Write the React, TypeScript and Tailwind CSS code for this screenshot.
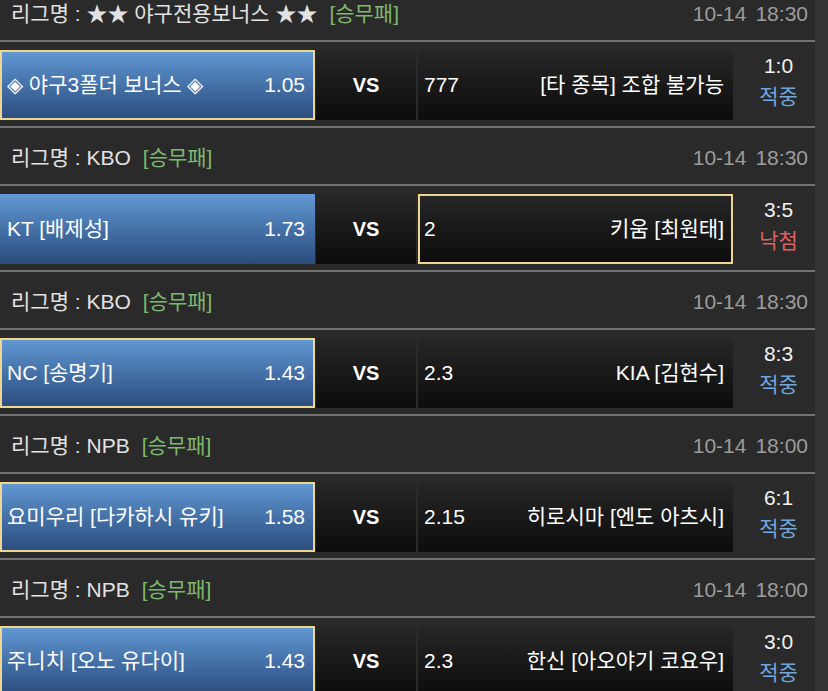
type Match = {
  league: string;
  date: string;
  time: string;
  home: string;
  homeOdds: string;
  away: string;
  awayOdds: string;
  pick: "home" | "away";
  score: string;
  win: boolean;
};

const matches: Match[] = [
  {
    league: "★★ 야구전용보너스 ★★",
    date: "10-14",
    time: "18:30",
    home: "◈ 야구3폴더 보너스 ◈",
    homeOdds: "1.05",
    away: "[타 종목] 조합 불가능",
    awayOdds: "777",
    pick: "home",
    score: "1:0",
    win: true,
  },
  {
    league: "KBO",
    date: "10-14",
    time: "18:30",
    home: "KT [배제성]",
    homeOdds: "1.73",
    away: "키움 [최원태]",
    awayOdds: "2",
    pick: "away",
    score: "3:5",
    win: false,
  },
  {
    league: "KBO",
    date: "10-14",
    time: "18:30",
    home: "NC [송명기]",
    homeOdds: "1.43",
    away: "KIA [김현수]",
    awayOdds: "2.3",
    pick: "home",
    score: "8:3",
    win: true,
  },
  {
    league: "NPB",
    date: "10-14",
    time: "18:00",
    home: "요미우리 [다카하시 유키]",
    homeOdds: "1.58",
    away: "히로시마 [엔도 아츠시]",
    awayOdds: "2.15",
    pick: "home",
    score: "6:1",
    win: true,
  },
  {
    league: "NPB",
    date: "10-14",
    time: "18:00",
    home: "주니치 [오노 유다이]",
    homeOdds: "1.43",
    away: "한신 [아오야기 코요우]",
    awayOdds: "2.3",
    pick: "home",
    score: "3:0",
    win: true,
  },
];

const picked = "shadow-[inset_0_0_0_2px_#ecd792]";

function MatchBlock({ m }: { m: Match }) {
  return (
    <div>
      <div className="flex h-[56px] items-center justify-between pl-[11px] pr-[7px] pt-1 text-[21px]">
        <div className="text-[#e2e2e2]">
          리그명 : {m.league}
          <span className="ml-3 text-[#7db86c]">[승무패]</span>
        </div>
        <div className="text-[#9c9c9c]">
          {m.date}
          <span className="ml-[9px]">{m.time}</span>
        </div>
      </div>
      <div className="h-[2px] bg-[#727272]" />
      <div className="flex gap-[1px] pb-[6px] pt-[8px] text-[21px] text-white">
        <div
          className={`flex h-[70px] w-[315px] items-center justify-between bg-linear-to-b from-[#6299d5] to-[#2a4c7c] pl-[7px] pr-[10px] ${
            m.pick === "home" ? picked : ""
          }`}
        >
          <span>{m.home}</span>
          <span>{m.homeOdds}</span>
        </div>
        <div className="flex h-[70px] w-[100px] items-center justify-center bg-linear-to-b from-[#272727] to-[#0c0c0c] text-[20px] font-bold">
          VS
        </div>
        <div
          className={`ml-[1px] flex h-[70px] w-[315px] items-center justify-between bg-linear-to-b from-[#272727] to-[#0c0c0c] pl-[6px] pr-[9px] ${
            m.pick === "away" ? picked : ""
          }`}
        >
          <span>{m.awayOdds}</span>
          <span>{m.away}</span>
        </div>
        <div className="flex flex-1 flex-col items-center justify-center pb-[8px] pl-[8px] leading-[31px]">
          <span className="text-[#f2f2f2]">{m.score}</span>
          <span className={m.win ? "text-[#6fa6de]" : "text-[#dd6262]"}>
            {m.win ? "적중" : "낙첨"}
          </span>
        </div>
      </div>
      <div className="h-[2px] bg-[#727272]" />
    </div>
  );
}

export default function App() {
  return (
    <div
      className="flex h-[691px] w-[828px] overflow-hidden bg-[#333333]"
      style={{ fontFamily: '"Liberation Sans", "Noto Sans CJK KR", sans-serif' }}
    >
      <div className="w-[815px] bg-[#2a2a2a]">
        <div className="-mt-[16px]">
          {matches.map((m, i) => (
            <MatchBlock key={i} m={m} />
          ))}
        </div>
      </div>
    </div>
  );
}
